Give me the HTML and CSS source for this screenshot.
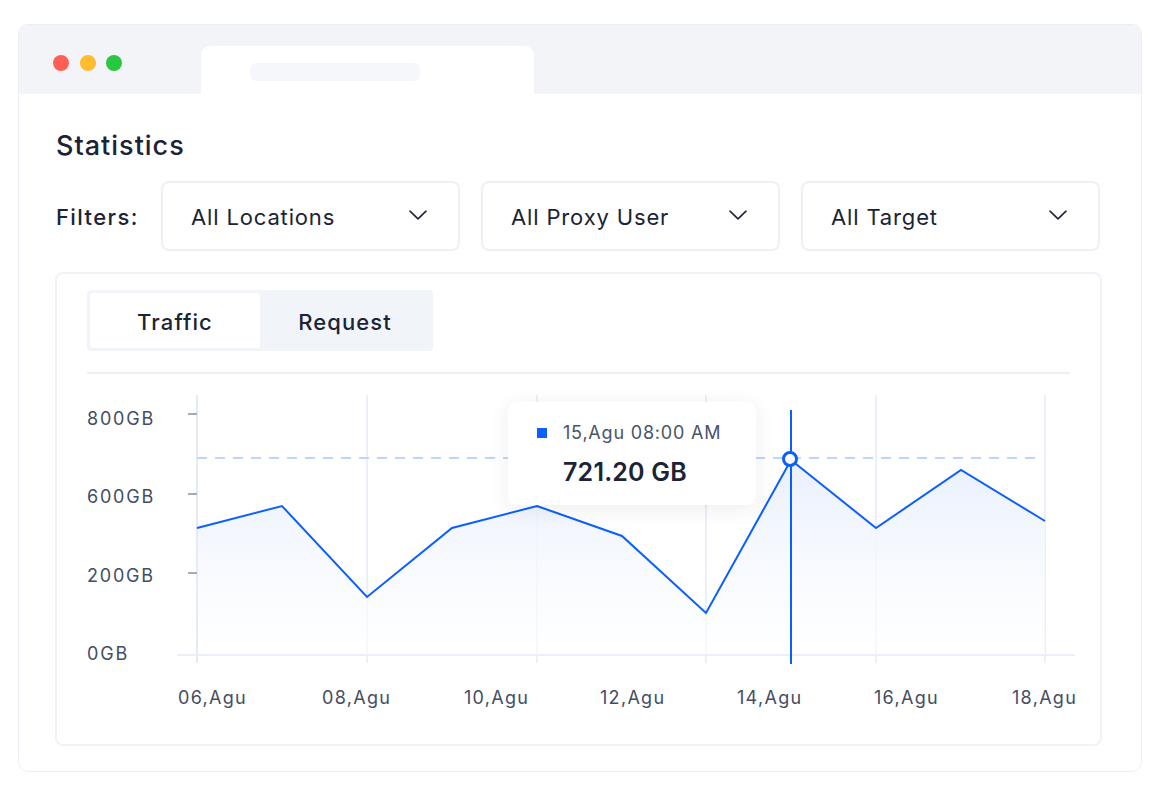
FILE: index.html
```html
<!DOCTYPE html>
<html lang="en">
<head>
<meta charset="utf-8">
<title>Statistics</title>
<link rel="stylesheet" href="styles.css">
</head>
<body>
<div class="window">
  <div class="titlebar">
    <div class="dots">
      <span class="dot red"></span>
      <span class="dot yellow"></span>
      <span class="dot green"></span>
    </div>
    <div class="tab"><span class="tab-pill"></span></div>
  </div>
  <div class="content">
    <h1 class="title">Statistics</h1>
    <div class="filters">
      <span class="filters-label">Filters:</span>
      <div class="select"><span>All Locations</span>
        <svg class="chev" width="18" height="10" viewBox="0 0 18 10"><path d="M1 1.2 L9 8.8 L17 1.2" fill="none" stroke="#1b2336" stroke-width="1.6" stroke-linecap="round" stroke-linejoin="round"/></svg>
      </div>
      <div class="select"><span>All Proxy User</span>
        <svg class="chev" width="18" height="10" viewBox="0 0 18 10"><path d="M1 1.2 L9 8.8 L17 1.2" fill="none" stroke="#1b2336" stroke-width="1.6" stroke-linecap="round" stroke-linejoin="round"/></svg>
      </div>
      <div class="select"><span>All Target</span>
        <svg class="chev" width="18" height="10" viewBox="0 0 18 10"><path d="M1 1.2 L9 8.8 L17 1.2" fill="none" stroke="#1b2336" stroke-width="1.6" stroke-linecap="round" stroke-linejoin="round"/></svg>
      </div>
    </div>
    <div class="card">
      <div class="segmented">
        <div class="seg active">Traffic</div>
        <div class="seg">Request</div>
      </div>
      <div class="divider"></div>
      <div class="chart">
        <svg class="chart-svg" width="1000" height="340" viewBox="87 380 1000 340">
          <defs>
            <linearGradient id="area" x1="0" y1="0" x2="0" y2="1">
              <stop offset="0" stop-color="#e9f0fd"/>
              <stop offset="1" stop-color="#ffffff" stop-opacity="0.6"/>
            </linearGradient>
          </defs>
          <g stroke="#eceff8" stroke-width="2">
            <line x1="367" y1="395" x2="367" y2="663"/>
            <line x1="537" y1="395" x2="537" y2="663"/>
            <line x1="706" y1="395" x2="706" y2="663"/>
            <line x1="876" y1="395" x2="876" y2="663"/>
            <line x1="1045" y1="395" x2="1045" y2="663"/>
          </g>
          <path d="M197 528 L282 506 L367 597 L452 528 L537 506 L622 536 L706 613 L791 460 L876 528 L961 470 L1045 521 L1045 655 L197 655 Z" fill="url(#area)"/>
          <line x1="197" y1="395" x2="197" y2="663" stroke="#e6eaf6" stroke-width="2"/>
          <line x1="177" y1="655" x2="1075" y2="655" stroke="#eceff8" stroke-width="2"/>
          <g stroke="#a3abbf" stroke-width="2">
            <line x1="188" y1="414" x2="197" y2="414"/>
            <line x1="188" y1="494" x2="197" y2="494"/>
            <line x1="188" y1="573" x2="197" y2="573"/>
          </g>
          <line x1="197" y1="458" x2="1036" y2="458" stroke="#bfd5fb" stroke-width="2" stroke-dasharray="10 8"/>
          <polyline points="197,528 282,506 367,597 452,528 537,506 622,536 706,613 791,460 876,528 961,470 1045,521" fill="none" stroke="#0b5fff" stroke-width="2" stroke-linejoin="miter"/>
          <line x1="791" y1="410" x2="791" y2="664" stroke="#0b5fff" stroke-width="2"/>
          <circle cx="790" cy="459" r="6.5" fill="#ffffff" stroke="#0b5fff" stroke-width="3"/>
          <g class="ylab">
            <text x="87" y="425">800GB</text>
            <text x="87" y="503">600GB</text>
            <text x="87" y="582">200GB</text>
            <text x="87" y="660">0GB</text>
          </g>
          <g class="xlab">
            <text x="178" y="704">06,Agu</text>
            <text x="322" y="704">08,Agu</text>
            <text x="464" y="704">10,Agu</text>
            <text x="600" y="704">12,Agu</text>
            <text x="737" y="704">14,Agu</text>
            <text x="874" y="704">16,Agu</text>
            <text x="1012" y="704">18,Agu</text>
          </g>
        </svg>
        <div class="tooltip">
          <div class="tt-head"><span class="tt-square"></span><span>15,Agu 08:00 AM</span></div>
          <div class="tt-value">721.20 GB</div>
        </div>
      </div>
    </div>
  </div>
</div>
</body>
</html>
```
FILE: styles.css
```css
* { box-sizing: border-box; }
html, body { margin: 0; padding: 0; background: #ffffff; }
body {
  font-family: Inter, "Noto Sans", "Liberation Sans", sans-serif;
  color: #1b2336;
  padding: 24px 18px 0 18px;
}
.window {
  width: 1124px;
  border: 1px solid #eceef5;
  border-radius: 10px;
  overflow: hidden;
  background: #ffffff;
}
.titlebar {
  height: 69px;
  background: #f3f4f8;
  display: flex;
  align-items: flex-start;
}
.dots {
  display: flex;
  gap: 10.5px;
  margin-left: 34px;
  margin-top: 30px;
}
.dot {
  width: 16px;
  height: 16px;
  border-radius: 50%;
  display: block;
}
.red { background: #ff5f57; }
.yellow { background: #febc2e; }
.green { background: #28c840; }
.tab {
  align-self: flex-end;
  margin-left: 79px;
  width: 333px;
  height: 48px;
  background: #ffffff;
  border-radius: 9px 9px 0 0;
  padding: 17px 0 0 49px;
}
.tab-pill {
  display: block;
  width: 170px;
  height: 18px;
  border-radius: 6px;
  background: #f6f7fa;
}
.content {
  padding: 36px 39px 25px 36px;
}
.title {
  margin: 0 0 0 1px;
  font-size: 27px;
  line-height: 31px;
  font-weight: 500;
  color: #1b2336;
  letter-spacing: 1px;
}
.filters {
  margin-top: 20px;
  display: flex;
  align-items: center;
  gap: 21px;
}
.filters-label {
  width: 84px;
  margin-left: 1px;
  padding-top: 2px;
  font-size: 22px;
  font-weight: 500;
  color: #1b2336;
  letter-spacing: 1.4px;
  white-space: nowrap;
}
.select {
  width: 299px;
  height: 70px;
  border: 2px solid #edf0f7;
  border-radius: 8px;
  display: flex;
  align-items: center;
  justify-content: space-between;
  padding: 2px 31px 0 28px;
  font-size: 22px;
  font-weight: 400;
  color: #1b2336;
  letter-spacing: 0.85px;
}
.chev { display: block; margin-top: -5px; }
.card {
  margin-top: 21px;
  border: 2px solid #f0f2f7;
  border-radius: 8px;
  padding: 16px 30px 24px 30px;
}
.segmented {
  width: 346px;
  height: 61px;
  background: #f1f4f9;
  border-radius: 4px;
  padding: 3px;
  display: flex;
}
.seg {
  width: 170px;
  display: flex;
  align-items: center;
  justify-content: center;
  padding-top: 2px;
  font-size: 22px;
  font-weight: 500;
  color: #1b2336;
  border-radius: 3px;
  letter-spacing: 1.1px;
}
.seg.active { background: #ffffff; }
.divider {
  margin-top: 21px;
  height: 2px;
  width: 983px;
  background: #eef0f7;
}
.chart {
  position: relative;
  margin-top: 6px;
  width: 1000px;
  height: 340px;
}
.chart-svg { display: block; overflow: visible; }
.ylab text, .xlab text {
  font-family: Inter, "Noto Sans", sans-serif;
  font-size: 18px;
  fill: #434d63;
}
.ylab text { letter-spacing: 1.8px; }
.xlab text { letter-spacing: 1.3px; }
.tooltip {
  position: absolute;
  left: 421px;
  top: 22px;
  width: 248px;
  height: 103px;
  background: #ffffff;
  border-radius: 8px;
  box-shadow: 0 4px 22px rgba(30, 40, 70, 0.08);
  padding: 19px 0 0 28px;
}
.tt-head {
  display: flex;
  align-items: center;
  gap: 16px;
  font-size: 18px;
  color: #4a5368;
  line-height: 24px;
  letter-spacing: 0.8px;
}
.tt-square {
  width: 10px;
  height: 10px;
  background: #0b5fff;
  display: block;
  margin-left: 1px;
}
.tt-value {
  margin-top: 12px;
  margin-left: 27px;
  font-size: 25px;
  font-weight: 600;
  color: #1b2336;
  line-height: 30px;
  letter-spacing: 0.2px;
}
```
